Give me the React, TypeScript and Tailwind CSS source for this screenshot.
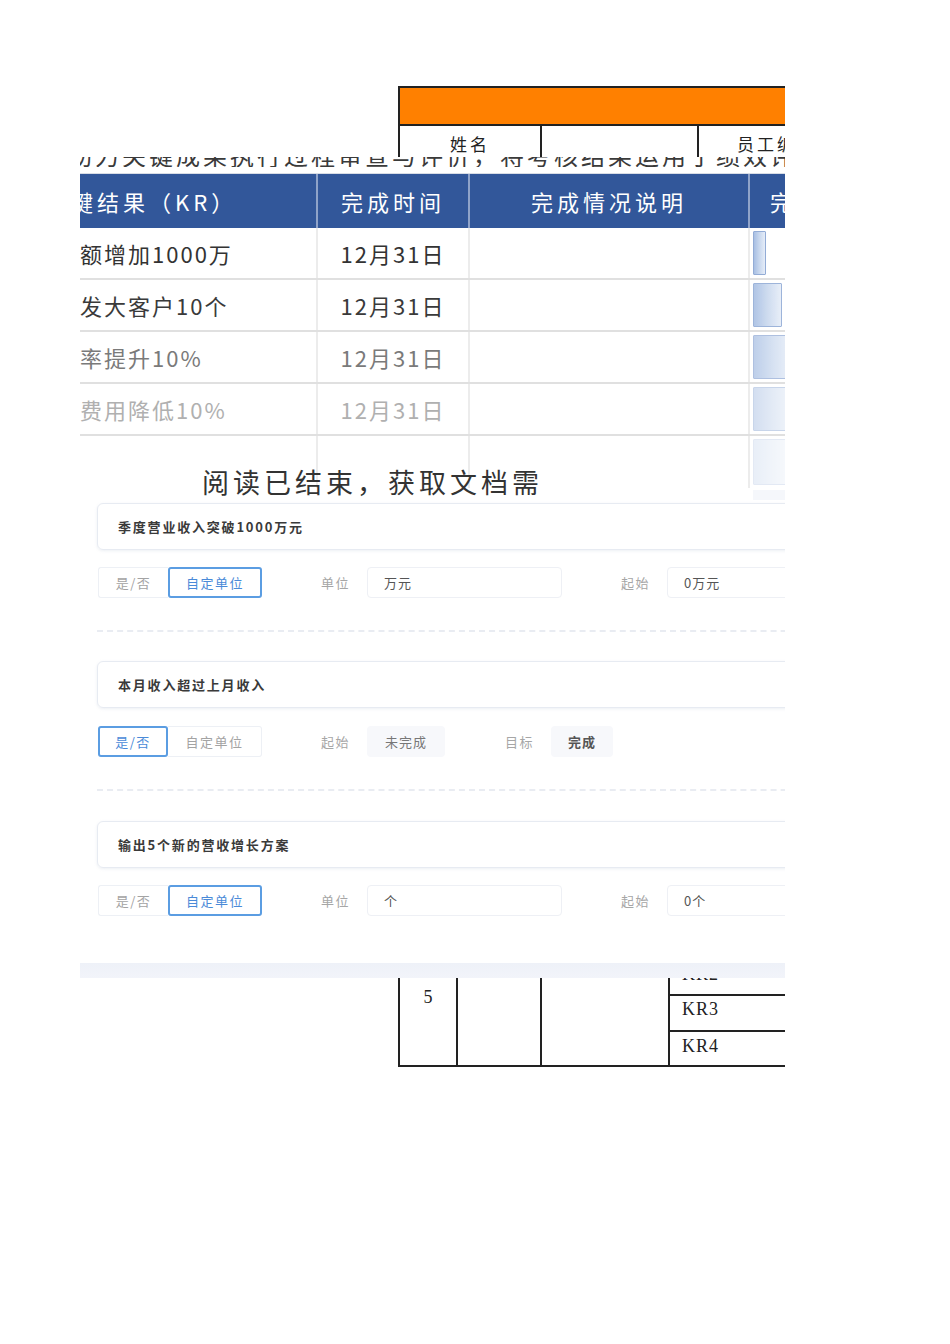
import React from 'react';

const sans = "font-['Noto_Sans_CJK_SC','Noto_Sans',sans-serif]";
const serif = "font-['Liberation_Serif','Noto_Sans_CJK_SC',serif]";

const krRows = [
  { text: '额增加1000万', color: 'text-[#333333]', bar: 'w-[13px] opacity-100' },
  { text: '发大客户10个', color: 'text-[#3a3a3a]', bar: 'w-[29px] opacity-90' },
  { text: '率提升10%', color: 'text-[#7a7a7a]', bar: 'w-[40px] opacity-75' },
  { text: '费用降低10%', color: 'text-[#b0b0b0]', bar: 'w-[40px] opacity-50' },
  { text: '', color: 'text-[#d0d0d0]', bar: 'w-[40px] opacity-25' },
];

function BackDocument() {
  return (
    <div className={`absolute left-[318px] top-[86px] w-[480px] ${serif} text-[#222]`}>
      <div className="h-[40px] bg-[#ff8000] border-2 border-[#222]" />
      <div className="grid grid-cols-[142px_157px_1fr] h-[40px] border-l-2 border-[#222] text-[17px] tracking-[3px]">
        <div className="border-r-2 border-[#222] flex items-start justify-center pt-[7px]">姓名</div>
        <div className="border-r-2 border-[#222]" />
        <div className="pl-[38px] pt-[7px] whitespace-nowrap">员工编号</div>
      </div>
      <div className="h-[759px] border-l-2 border-[#222]" />
      <div className="grid grid-cols-[58px_84px_128px_1fr] h-[142px] border-l-2 border-b-2 border-[#222] text-[18px]">
        <div className="border-r-2 border-[#222] flex items-center justify-center pt-[2px]">5</div>
        <div className="border-r-2 border-[#222]" />
        <div className="border-r-2 border-[#222]" />
        <div className="flex flex-col">
          {['KR1', 'KR2', 'KR3', 'KR4'].map((k, i) => (
            <div
              key={k}
              className={`h-[35.5px] flex items-center pl-[12px] pb-[6px] tracking-[1px] ${i < 3 ? 'border-b-2 border-[#222]' : ''}`}
            >
              {k}
            </div>
          ))}
        </div>
      </div>
    </div>
  );
}

function KrTable() {
  return (
    <div className={`absolute left-0 top-[157px] w-full h-[343px] bg-white ${sans}`}>
      <div className="h-[10px] overflow-hidden">
        <div className="-mt-[15px] whitespace-nowrap text-[24px] leading-[26px] tracking-[3px] text-[#3a3a3a] -ml-[12px]">
          助力关键成果执行过程审查与评价，将考核结果运用于绩效评价（模块结果）
        </div>
      </div>
      <div className="h-[7px] border-b border-[#d8dde6]" />
      <div className="grid grid-cols-[238px_152px_280px_1fr] h-[54px] bg-[#32579a] text-white text-[22px] tracking-[4px]">
        <div className="flex items-center overflow-hidden border-r-2 border-[#8fa3c9]">
          <span className="-ml-[9px] whitespace-nowrap">键结果（KR）</span>
        </div>
        <div className="flex items-center justify-center border-r-2 border-[#8fa3c9]">完成时间</div>
        <div className="flex items-center justify-center border-r-2 border-[#8fa3c9]">完成情况说明</div>
        <div className="flex items-center pl-[20px]">完</div>
      </div>
      {krRows.map((r, i) => (
        <div
          key={i}
          className={`grid grid-cols-[238px_152px_280px_1fr] h-[52px] text-[22px] tracking-[2px] ${r.color} ${
            i < 4 ? 'border-b-2 border-[#e0e0e0]' : ''
          }`}
        >
          <div className="flex items-center whitespace-nowrap border-r-2 border-[#ececec]">{r.text}</div>
          <div className="flex items-center justify-center border-r-2 border-[#ececec]">
            {i < 4 ? '12月31日' : ''}
          </div>
          <div className="border-r-2 border-[#ececec]" />
          <div className="flex items-stretch py-[3px] pl-[3px]">
            <div
              className={`${r.bar} rounded-[1px] border border-[#93acd6] bg-gradient-to-r from-[#a8bfe3] via-[#c9d8ee] to-[#e6edf8]`}
            />
          </div>
        </div>
      ))}
      <div className="h-[12px] pl-[673px] pt-[2px]">
        <div className="w-[40px] h-full bg-[#eef2f9] opacity-60" />
      </div>
    </div>
  );
}

function Segmented({ active }: { active: 'yn' | 'unit' }) {
  return (
    <div className="flex h-[31px] text-[13px] tracking-[1.5px]">
      <div
        className={`w-[70px] flex items-center justify-center rounded-l-[3px] ${
          active === 'yn'
            ? 'border-2 border-[#5b9de2] text-[#4a8ad8] rounded-[3px]'
            : 'border border-r-0 border-[#edf0f5] text-[#a3a3a3]'
        }`}
      >
        是/否
      </div>
      <div
        className={`w-[94px] flex items-center justify-center ${
          active === 'unit'
            ? 'border-2 border-[#5b9de2] text-[#4a8ad8] rounded-[3px]'
            : 'border border-l-0 border-[#edf0f5] text-[#a3a3a3] rounded-r-[3px]'
        }`}
      >
        自定单位
      </div>
    </div>
  );
}

function Field({ label, value, width }: { label: string; value: string; width: string }) {
  return (
    <div className="flex items-center">
      <span className="w-[31px] text-[13px] tracking-[1.5px] text-[#a6a6a6] whitespace-nowrap">{label}</span>
      <div
        className={`ml-[15px] ${width} h-[31px] flex items-center pl-[16px] rounded-[4px] border border-[#eef0f5] text-[13px] tracking-[1px] text-[#555]`}
      >
        {value}
      </div>
    </div>
  );
}

function Chip({ label, value, width, bold }: { label: string; value: string; width: string; bold?: boolean }) {
  return (
    <div className="flex items-center">
      <span className="w-[31px] text-[13px] tracking-[1.5px] text-[#a6a6a6] whitespace-nowrap">{label}</span>
      <div
        className={`ml-[15px] ${width} h-[31px] flex items-center justify-center rounded-[4px] bg-[#f7f8fb] text-[13px] tracking-[1px] ${
          bold ? 'font-bold text-[#555]' : 'text-[#777]'
        }`}
      >
        {value}
      </div>
    </div>
  );
}

function Card({ title }: { title: string }) {
  return (
    <div className="h-[47px] w-[760px] rounded-[6px] border border-[#e7ebf2] shadow-[0_1px_3px_rgba(180,190,210,0.25)] flex items-center pl-[20px] text-[13px] font-bold tracking-[1.8px] text-[#3a3a3a]">
      {title}
    </div>
  );
}

function OkrPanel() {
  return (
    <div className={`absolute left-0 top-[500px] w-full h-[478px] bg-white flex flex-col ${sans}`}>
      <div className="flex-1 pl-[17px] pt-[3px]">
        {/* KR 1 */}
        <Card title="季度营业收入突破1000万元" />
        <div className="mt-[17px] flex items-center pl-[1px]">
          <Segmented active="unit" />
          <div className="ml-[59px]">
            <Field label="单位" value="万元" width="w-[195px]" />
          </div>
          <div className="ml-[59px]">
            <Field label="起始" value="0万元" width="w-[195px]" />
          </div>
        </div>
        <div className="mt-[32px] w-[760px] border-t-2 border-dashed border-[#e9ecf2]" />

        {/* KR 2 */}
        <div className="mt-[29px]">
          <Card title="本月收入超过上月收入" />
        </div>
        <div className="mt-[18px] flex items-center pl-[1px]">
          <Segmented active="yn" />
          <div className="ml-[59px]">
            <Chip label="起始" value="未完成" width="w-[78px]" />
          </div>
          <div className="ml-[60px]">
            <Chip label="目标" value="完成" width="w-[62px]" bold />
          </div>
        </div>
        <div className="mt-[32px] w-[760px] border-t-2 border-dashed border-[#e9ecf2]" />

        {/* KR 3 */}
        <div className="mt-[30px]">
          <Card title="输出5个新的营收增长方案" />
        </div>
        <div className="mt-[17px] flex items-center pl-[1px]">
          <Segmented active="unit" />
          <div className="ml-[59px]">
            <Field label="单位" value="个" width="w-[195px]" />
          </div>
          <div className="ml-[59px]">
            <Field label="起始" value="0个" width="w-[195px]" />
          </div>
        </div>
      </div>
      <div className="h-[15px] bg-gradient-to-b from-[#eef1f8] to-[#f2f4fa]" />
    </div>
  );
}

export default function App() {
  return (
    <div className="relative w-[950px] h-[1344px] bg-white overflow-hidden">
      <div className="absolute left-[80px] top-0 w-[705px] h-full overflow-hidden">
        <BackDocument />
        <KrTable />
        <div
          className={`absolute left-[122px] top-[462px] text-[27px] tracking-[4px] text-[#333] whitespace-nowrap ${sans}`}
        >
          阅读已结束，获取文档需
        </div>
        <OkrPanel />
      </div>
    </div>
  );
}
